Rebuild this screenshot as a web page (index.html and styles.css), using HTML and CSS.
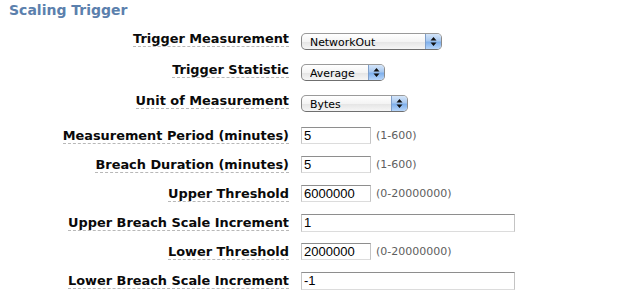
FILE: index.html
```html
<!DOCTYPE html>
<html lang="en">
<head>
    <meta charset="UTF-8">
    <meta name="viewport" content="width=device-width, initial-scale=1.0">
    <title>Scaling Trigger</title>
    <link rel="stylesheet" href="styles.css">
</head>
<body>
    <div class="panel">
        <h2 class="title">Scaling Trigger</h2>

        <div class="row pick">
            <label class="name"><span>Trigger Measurement</span></label>
            <div class="select wide-pick">
                <select><option>NetworkOut</option></select>
                <span class="arrows"><svg width="7" height="11" viewBox="0 0 7 11"><path d="M3.5 1 L6.5 4.5 H0.5 Z M3.5 10 L6.5 6.5 H0.5 Z" fill="#111"/></svg></span>
            </div>
        </div>
        <div class="row pick">
            <label class="name"><span>Trigger Statistic</span></label>
            <div class="select short-pick">
                <select><option>Average</option></select>
                <span class="arrows"><svg width="7" height="11" viewBox="0 0 7 11"><path d="M3.5 1 L6.5 4.5 H0.5 Z M3.5 10 L6.5 6.5 H0.5 Z" fill="#111"/></svg></span>
            </div>
        </div>
        <div class="row pick">
            <label class="name"><span>Unit of Measurement</span></label>
            <div class="select mid-pick">
                <select><option>Bytes</option></select>
                <span class="arrows"><svg width="7" height="11" viewBox="0 0 7 11"><path d="M3.5 1 L6.5 4.5 H0.5 Z M3.5 10 L6.5 6.5 H0.5 Z" fill="#111"/></svg></span>
            </div>
        </div>

        <div class="row gap">
            <label class="name"><span>Measurement Period (minutes)</span></label>
            <input class="field" type="text" value="5">
            <span class="hint">(1-600)</span>
        </div>
        <div class="row">
            <label class="name"><span>Breach Duration (minutes)</span></label>
            <input class="field" type="text" value="5">
            <span class="hint">(1-600)</span>
        </div>
        <div class="row">
            <label class="name"><span>Upper Threshold</span></label>
            <input class="field" type="text" value="6000000">
            <span class="hint">(0-20000000)</span>
        </div>
        <div class="row">
            <label class="name"><span>Upper Breach Scale Increment</span></label>
            <input class="field long" type="text" value="1">
        </div>
        <div class="row">
            <label class="name"><span>Lower Threshold</span></label>
            <input class="field" type="text" value="2000000">
            <span class="hint">(0-20000000)</span>
        </div>
        <div class="row">
            <label class="name"><span>Lower Breach Scale Increment</span></label>
            <input class="field long" type="text" value="-1">
        </div>
    </div>
</body>
</html>
```

FILE: styles.css
```css
body {
    margin: 0;
    background-color: #fff;
    color: #000;
    font-family: "DejaVu Sans", Verdana, sans-serif;
}
.panel {
    padding-left: 9px;
}
.title {
    margin: 2px 0 7px 0;
    font-size: 14px;
    line-height: 17px;
    font-weight: bold;
    color: #5b80ad;
}
.row {
    display: flex;
    align-items: center;
    height: 29px;
}
.row.pick {
    height: 31px;
}
.row.gap {
    margin-top: 2px;
}
.name {
    flex: none;
    width: 280px;
    margin-right: 12px;
    text-align: right;
    font-size: 12.9px;
    font-weight: bold;
    line-height: 16px;
    color: #0a0a0a;
}
.row.pick .name {
    margin-bottom: 5px;
}
.name span {
    border-bottom: 1px dashed #b8b8b8;
}
.select {
    display: flex;
    height: 17px;
    box-sizing: border-box;
    border: 1px solid #8a8a8a;
    border-top-color: #9a9a9a;
    border-bottom-color: #6f6f6f;
    border-radius: 5px;
    overflow: hidden;
    background: linear-gradient(#ffffff, #f4f4f4 50%, #e4e4e4 51%, #f6f6f6);
}
.select select {
    flex: 1;
    min-width: 0;
    appearance: none;
    -webkit-appearance: none;
    border: none;
    background: transparent;
    margin: 0;
    padding: 1px 0 0 8px;
    font-family: "DejaVu Sans", sans-serif;
    font-size: 10.9px;
    color: #000;
    outline: none;
}
.arrows {
    flex: none;
    width: 15px;
    display: flex;
    align-items: center;
    justify-content: center;
    border-left: 1px solid #7f9fca;
    background: linear-gradient(#d4e5f9, #a9c9f0 45%, #7fb0ec 55%, #b8d6fa);
}
.wide-pick {
    width: 141px;
}
.short-pick {
    width: 84px;
}
.mid-pick {
    width: 107px;
}
.field {
    width: 70px;
    height: 17px;
    box-sizing: border-box;
    margin: 0;
    padding: 0 2px;
    border: 1px solid #c4c4c4;
    border-top-color: #8e8e8e;
    border-bottom-color: #dcdcdc;
    font-family: "Liberation Sans", Arial, sans-serif;
    font-size: 13px;
    color: #000;
    background: #fff;
    outline: none;
}
.field.long {
    width: 214px;
    height: 18px;
}
.hint {
    margin-left: 5px;
    font-size: 11px;
    color: #5e5e5e;
}
```
